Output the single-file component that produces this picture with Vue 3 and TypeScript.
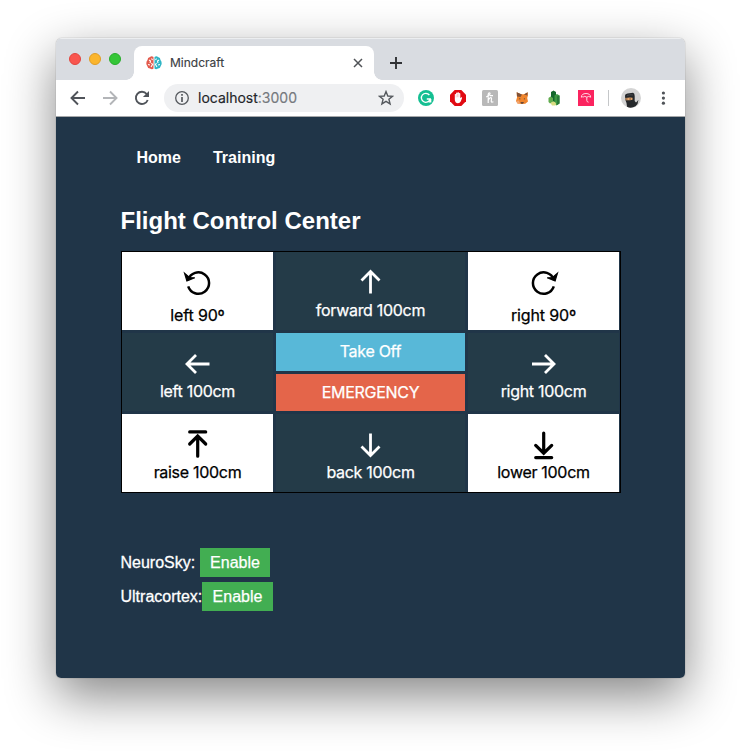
<script setup lang="ts">
type IconName = 'ccw' | 'cw' | 'up' | 'down' | 'left' | 'right' | 'raise' | 'lower'

interface Command {
  icon: IconName
  label: string
  area: string
  light?: boolean
}

const commands: Command[] = [
  { icon: 'ccw', label: 'left 90º', area: 'ccw', light: true },
  { icon: 'up', label: 'forward 100cm', area: 'forward' },
  { icon: 'cw', label: 'right 90º', area: 'cw', light: true },
  { icon: 'left', label: 'left 100cm', area: 'left' },
  { icon: 'right', label: 'right 100cm', area: 'right' },
  { icon: 'raise', label: 'raise 100cm', area: 'raise', light: true },
  { icon: 'down', label: 'back 100cm', area: 'back' },
  { icon: 'lower', label: 'lower 100cm', area: 'lower', light: true },
]

const strokes: Record<IconName, string> = {
  ccw: 'M6.2 19.4A10.7 10.7 0 1 0 6.2 12.8',
  cw: 'M25.8 19.4A10.7 10.7 0 1 1 25.8 12.8',
  up: 'M15.5 27.5V6M6.5 14.5L15.5 5.5L24.5 14.5',
  down: 'M15.5 4.5V26M6.5 17.5L15.5 26.5L24.5 17.5',
  left: 'M27.5 16H5.5M14 7L5 16L14 25',
  right: 'M4 16H26M17 7L26 16L17 25',
  raise: 'M7.7 2.9H23.7M15.7 27.2V8M7.7 15L15.7 7L23.700 15',
  lower: 'M7.700 28.600H23.700M15.700 4V23M7.700 16.400L15.700 24.200L23.700 16.400',
}

const devices = [
  { name: 'NeuroSky:', key: 'neurosky' },
  { name: 'Ultracortex:', key: 'ultracortex' },
]
</script>

<template>
  <div class="desktop">
    <div class="window">
      <div class="tabstrip">
        <div class="lights"><i class="red"></i><i class="yellow"></i><i class="green"></i></div>
        <div class="tab">
          <svg class="favicon" width="16" height="14" viewBox="0 0 16 14">
            <path d="M7.5 1Q5.5-.3 4 1Q1.5 1.6 1.5 4Q-.6 6.8 1 9.5Q1.4 12 4 12.5Q6 14 7.5 12.6Z" fill="#e35b4d" />
            <path d="M8.5 1Q10.5-.3 12 1Q14.5 1.6 14.5 4Q16.6 6.8 15 9.5Q14.6 12 12 12.5Q10 14 8.5 12.6Z" fill="#2fb5c5" />
            <path d="M3 4L4.5 5L4 7M5.5 2.5L6.5 4M2 8.5L4 9M5.5 7L6.5 8.5L5 11M13 4L11.5 5L12 7M10.5 2.5L9.5 4M14 8.5L12 9M10.5 7L9.5 8.5L11 11" fill="none" stroke="#fff" stroke-width="1.1" />
          </svg>
          <span class="tab-title">Mindcraft</span>
          <svg class="close" width="10" height="10" viewBox="0 0 10 10"><path d="M1 1L9 9M9 1L1 9" stroke="#505357" stroke-width="1.5" /></svg>
        </div>
        <svg class="plus" width="12" height="12" viewBox="0 0 12 12"><path d="M6 0V12M0 6H12" stroke="#303235" stroke-width="1.9" /></svg>
      </div>

      <div class="toolbar">
        <span class="slot"><svg width="16" height="16" viewBox="0 0 16 16"><path d="M15 8H2M8 1.5L1.5 8L8 14.5" fill="none" stroke="#50545a" stroke-width="1.9" /></svg></span>
        <span class="slot"><svg width="16" height="16" viewBox="0 0 16 16"><path d="M1 8H14M8 1.5L14.5 8L8 14.5" fill="none" stroke="#b3b5b8" stroke-width="1.9" /></svg></span>
        <span class="slot"><svg width="16" height="16" viewBox="0 0 16 16"><path d="M13.7 10A6.1 6.1 0 1 1 12.7 4" fill="none" stroke="#50545a" stroke-width="1.9" /><path d="M15 .9V7H8.9Z" fill="#50545a" /></svg></span>
        <div class="omnibox">
          <svg width="16" height="16" viewBox="0 0 16 16"><circle cx="8" cy="8" r="6.3" fill="none" stroke="#55595e" stroke-width="1.3" /><path d="M8 7V12M8 4V5.7" stroke="#55595e" stroke-width="1.7" /></svg>
          <span class="url"><b>localhost</b>:3000</span>
          <svg width="16" height="16" viewBox="0 0 16 16"><path d="M8 1.6L9.8 6L14.5 6.3L10.9 9.3L12.1 13.9L8 11.4L3.9 13.9L5.1 9.3L1.5 6.3L6.2 6Z" fill="none" stroke="#55595e" stroke-width="1.4" /></svg>
        </div>
        <span class="slot first"><svg width="16" height="16" viewBox="0 0 16 16"><circle cx="8" cy="8" r="8" fill="#15bf92" /><path d="M11.4 5A4.5 4.5 0 1 0 12.2 9H8.8M10.6 11.9H12.7V9" fill="none" stroke="#fff" stroke-width="1.3" /></svg></span>
        <span class="slot"><svg width="16" height="16" viewBox="0 0 16 16"><path d="M4.7 0H11.3L16 4.7V11.3L11.3 16H4.7L0 11.3V4.7Z" fill="#e10a12" /><path d="M4.8 8V4.3Q5.5 3.6 6.1 4.3V3Q6.8 2.2 7.5 3V2.5Q8.2 1.8 8.9 2.5V3.3Q9.7 2.6 10.3 3.5V8.2L11.2 7.2Q12.3 6.9 12.1 8L10.7 11.6Q9.8 13.3 8 13.3Q4.9 13.1 4.8 9.5Z" fill="#fff" /><path d="M6.1 4.5V7.5M7.5 3.5V7.2M8.9 3.5V7.2" stroke="#e87579" stroke-width=".35" /></svg></span>
        <span class="slot"><svg width="16" height="16" viewBox="0 0 16 16"><rect width="16" height="16" rx="1.5" fill="#b8b8b8" /><path d="M6.2 13V4.3Q6.8 2.3 8 3.2Q8.6 4.7 4.2 7M6.2 10.4Q8 7 9.3 7.8Q9.9 8.4 9.3 10.6Q8.8 13 11.4 11.8M7.8 5.6H11" fill="none" stroke="#fff" stroke-width="1.2" /></svg></span>
        <span class="slot"><svg width="16" height="16" viewBox="0 0 16 16"><path d="M2.7 2.2L7 4.3H10L13.6 2.2L14 5.5L13.2 8L14 11.5L11.3 13.7L8 14L3.5 13.6L2 11L3 7.5Z" fill="#ef852d" /><path d="M2.7 2.2L8 4.4L6.5 7L3 6.5ZM10 4.4L13.7 2.2L13.3 5.5Z" fill="#805137" /><path d="M5 8L7 9L5.4 9.5ZM11 8L9.5 9L11 9.4ZM6.5 12H10L9 13.7H7Z" fill="#6d4a37" /><path d="M2 11L5 10.5L6 13.7L3.5 13.6Z" fill="#f1a46e" /></svg></span>
        <span class="slot"><svg width="16" height="16" viewBox="0 0 16 16"><path d="M5 2L7.5 .4L10 2V11L7 13L5 11Z" fill="#14682d" /><path d="M8.5 5.5L11 4L13.5 5.5V13.5L10.5 15.5L8.5 13.5Z" fill="#3c9842" /><path d="M11 6.5L13.5 5.5V13.5L11 15Z" fill="#277a38" /><path d="M2.5 8L4.5 6.5L7 8V12L4 13.5L2.5 12Z" fill="#60ac4e" /><path d="M4.5 13L7.5 11.3L10 13L9.5 15.5H6Z" fill="#d9dd83" /></svg></span>
        <span class="slot"><svg width="16" height="16" viewBox="0 0 16 16"><rect width="16" height="16" fill="#fb245f" /><path d="M3.3 7.2Q3.5 3.6 8 3.5Q12.5 3.6 12.7 7.2Q10.5 5.7 8.8 7.2Q6.5 5.6 5.2 7Q4.3 6.5 3.3 7.2ZM8.8 7.2V10.500Q8.900 12 10.500 12.200" fill="none" stroke="#ffd8e3" stroke-width="1" /></svg></span>
        <span class="divider"></span>
        <span class="slot"><svg width="20" height="20" viewBox="0 0 20 20"><circle cx="10" cy="10" r="10" fill="#d4d4d4" /><path d="M4 8Q3.700 6 6.500 5.500L12 4.700Q13.700 5 13.700 8V13L15 14.500Q16.500 13.500 17.300 11.800Q17.500 16 14.500 18.300Q10 20.800 6 18.700L5.500 15Q4 12 4 8Z" fill="#25282b" /><path d="M4.400 10Q8.500 9.300 11.500 9.800V11.700Q8 12.500 4.700 12.200Z" fill="#e7a66b" /><path d="M5 11H6.500M8.300 11H10" stroke="#4a3529" stroke-width=".8" /><path d="M6 7.500Q9 6.300 12 7" fill="none" stroke="#4b5055" stroke-width=".8" /></svg></span>
        <span class="slot"><svg width="16" height="16" viewBox="0 0 16 16" fill="#505459"><circle cx="8.400" cy="3" r="1.600" /><circle cx="8.400" cy="8.100" r="1.600" /><circle cx="8.400" cy="13.200" r="1.600" /></svg></span>
      </div>

      <main class="page">
        <nav><a>Home</a><a>Training</a></nav>
        <h1>Flight Control Center</h1>

        <div class="board">
          <button v-for="c in commands" :key="c.area" class="cell" :class="[c.area, { light: c.light }]">
            <svg width="32" height="32" viewBox="0 0 32 32" class="glyph" :class="c.icon">
              <path :d="strokes[c.icon]" />
              <path v-if="c.icon === 'ccw'" class="head" d="M2.600 6.300L4.900 13.900L12.800 10.800L7.700 10.600Z" />
              <path v-if="c.icon === 'cw'" class="head" d="M29.400 6.300L27.100 13.900L19.200 10.800L24.300 10.600Z" />
            </svg>
            <span>{{ c.label }}</span>
          </button>
          <div class="center">
            <button class="takeoff">Take Off</button>
            <button class="emergency">EMERGENCY</button>
          </div>
        </div>

        <div class="devices">
          <div v-for="d in devices" :key="d.key" class="device" :class="d.key">
            <span>{{ d.name }}</span><button>Enable</button>
          </div>
        </div>
      </main>
    </div>
  </div>
</template>

<style>
body {
  margin: 0;
  background: #fff;
}
</style>

<style scoped>
* {
  box-sizing: border-box;
}
.desktop {
  width: 741px;
  height: 752px;
  padding: 38px 56px 74px;
  overflow: hidden;
  font-family: "Liberation Sans", Arial, sans-serif;
}
.window {
  width: 629px;
  height: 640px;
  border-radius: 6px 6px 5px 5px;
  overflow: hidden;
  box-shadow: 0 0 1px rgba(0, 0, 0, 0.55), 0 18px 50px rgba(0, 0, 0, 0.48);
}
svg {
  display: block;
  flex: none;
}
.tabstrip {
  height: 42px;
  display: flex;
  background: #d9dce1;
  box-shadow: inset 0 1px #eceef0;
}
.lights {
  width: 78px;
  padding: 15px 0 0 13px;
  display: flex;
  gap: 8px;
}
.lights i {
  width: 12px;
  height: 12px;
  border-radius: 50%;
  border: 1px solid #e2463f;
  background: #f9564f;
}
.lights .yellow {
  background: #fbb52c;
  border-color: #e09d25;
}
.lights .green {
  background: #35c638;
  border-color: #27ad2b;
}
.tab {
  position: relative;
  width: 240px;
  height: 34px;
  margin-top: 8px;
  padding: 0 11px 0 12px;
  display: flex;
  align-items: center;
  background: #fff;
  border-radius: 8px 8px 0 0;
}
.tab::before,
.tab::after {
  content: "";
  position: absolute;
  bottom: 0;
  width: 8px;
  height: 8px;
}
.tab::before {
  left: -8px;
  background: radial-gradient(circle at 0 0, transparent 7.5px, #fff 8px);
}
.tab::after {
  right: -8px;
  background: radial-gradient(circle at 100% 0, transparent 7.5px, #fff 8px);
}
.tab-title {
  flex: 1;
  margin-left: 8px;
  font: 12px/16px Inter, sans-serif;
  color: #3c4043;
  -webkit-text-stroke: 0.15px currentColor;
}
.plus {
  margin: 19px 0 0 16px;
}
.toolbar {
  height: 37px;
  padding: 0 0 0 6px;
  display: flex;
  align-items: center;
  background: #fff;
  border-bottom: 1px solid #a5a7a9;
}
.slot {
  width: 32px;
  flex: none;
  display: flex;
  justify-content: center;
}
.slot.first {
  margin-left: 6px;
}
.omnibox {
  width: 240px;
  height: 28px;
  margin-left: 6px;
  padding: 0 10px;
  display: flex;
  align-items: center;
  border-radius: 14px;
  background: #eff0f2;
}
.url {
  flex: 1;
  margin-left: 8px;
  font: 14px/20px Inter, sans-serif;
  color: #75797e;
  -webkit-text-stroke: 0.15px currentColor;
}
.url b {
  font-weight: 400;
  color: #232528;
}
.divider {
  width: 1px;
  height: 16px;
  margin: 0 6px;
  background: #c5c7c9;
}
.page {
  height: 561px;
  padding: 31px 64px 0 65px;
  background: #203548;
  color: #fff;
}
nav {
  display: flex;
  gap: 32px;
  padding-left: 15.5px;
  font-size: 16px;
  font-weight: 700;
  line-height: 20px;
}
h1 {
  margin: 37px 0 0 -0.5px;
  font-size: 24px;
  font-weight: 700;
  line-height: 32px;
}
.board {
  width: 500px;
  height: 242px;
  margin-top: 14px;
  display: grid;
  grid-template: 78px 78px 78px / 151px 189px 151px;
  grid-template-areas: "ccw forward cw" "left center right" "raise back lower";
  gap: 3px;
  border: 1px solid #000;
}
button {
  border: 0;
  margin: 0;
  padding: 0;
  color: #fff;
  font: 16px/20px Inter, sans-serif;
  letter-spacing: -0.3px;
  -webkit-text-stroke: 0.25px currentColor;
}
.cell {
  display: flex;
  flex-direction: column;
  align-items: center;
  justify-content: flex-start;
  gap: 1px;
  padding-top: 15px;
  background: #243b48;
  white-space: nowrap;
}
.cell.light {
  background: #fff;
  color: #000;
}
.ccw { grid-area: ccw; }
.cw { grid-area: cw; }
.forward { grid-area: forward; }
.left { grid-area: left; }
.right { grid-area: right; }
.raise { grid-area: raise; }
.back { grid-area: back; }
.lower { grid-area: lower; }
.cell.ccw,
.cell.cw {
  gap: 6px;
  letter-spacing: -0.15px;
}
.cell.forward {
  padding-top: 14px;
  gap: 2px;
}
.glyph {
  fill: none;
  stroke: currentColor;
  stroke-width: 2.8;
}
.glyph.raise,
.glyph.lower {
  stroke-width: 3.2;
  stroke-linecap: round;
}
.glyph.ccw,
.glyph.cw {
  stroke-width: 2.5;
}
.glyph .head {
  fill: currentColor;
  stroke-width: 1.2;
}
.center {
  grid-area: center;
  display: grid;
  grid-template-rows: 38px 37px;
  gap: 3px;
}
.center button {
  padding-bottom: 2px;
}
.takeoff {
  background: #58b8d8;
}
.emergency {
  background: #e4654a;
}
.devices {
  margin-top: 55px;
  display: flex;
  flex-direction: column;
  gap: 5px;
}
.device {
  height: 29px;
  display: flex;
  align-items: center;
  font-size: 16px;
  line-height: 20px;
}
.device span {
  -webkit-text-stroke: 0.3px currentColor;
  text-indent: -0.5px;
}
.device button {
  width: 71px;
  height: 29px;
  background: #42ae52;
  font-family: "Liberation Sans", Arial, sans-serif;
  letter-spacing: 0;
}
.device.neurosky button {
  width: 70px;
}
.device.neurosky span {
  width: 79px;
}
.device.ultracortex span {
  width: 81px;
}
</style>
